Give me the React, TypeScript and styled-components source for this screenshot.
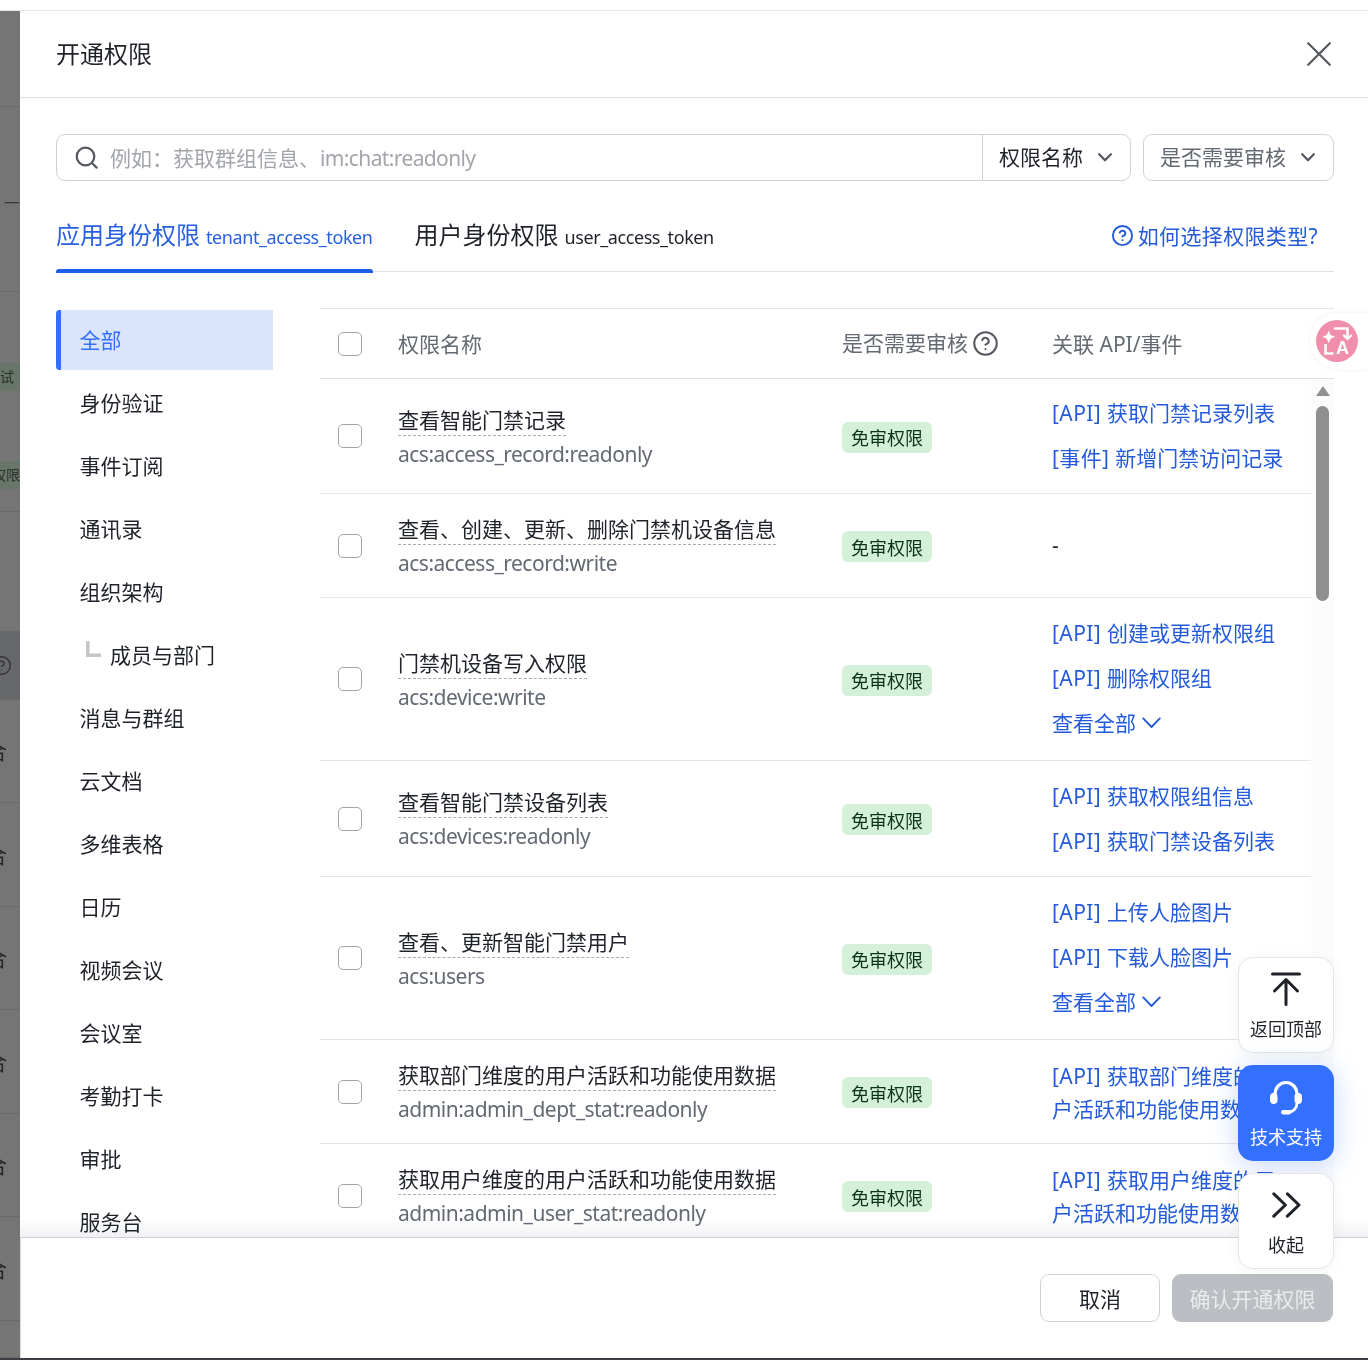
import { createGlobalStyle, styled } from 'styled-components';
import { CircleHelp } from 'lucide-react';

const GlobalStyle = createGlobalStyle`
  html, body { margin: 0; padding: 0; background: #fff; }
  body { font-family: "Noto Sans", "Noto Sans CJK SC", sans-serif; color: #1f2329; }
  * { box-sizing: border-box; }
`;

const Page = styled.div`
  position: relative;
  width: 1368px;
  height: 1360px;
  display: flex;
  flex-direction: column;
  overflow: hidden;
  background: #fff;
`;

const TopRule = styled.div`
  height: 11px;
  flex: none;
  border-bottom: 1px solid #e4e5e7;
`;

const BottomBar = styled.div`
  height: 2px;
  flex: none;
  background: #3b3e42;
`;

const Stage = styled.div`
  flex: 1;
  min-height: 0;
  display: flex;
`;

/* dimmed page behind the drawer */
const Backdrop = styled.div`
  width: 20px;
  flex: none;
  display: flex;
  flex-direction: column;
  overflow: hidden;
  background: #757575;
  padding-top: 1px;
`;

const BackRow = styled.div<{ $h: number; $dark?: boolean; $start?: boolean }>`
  height: ${(p) => p.$h}px;
  flex: none;
  display: flex;
  flex-direction: column;
  align-items: flex-end;
  justify-content: ${(p) => (p.$start ? 'flex-start' : 'center')};
  border-bottom: 1px solid #696969;
  background: ${(p) => (p.$dark ? '#65676a' : '#757575')};
  color: #262626;
  font-size: 21px;
  line-height: 30px;
  padding-right: 13px;
  white-space: nowrap;
`;

const BackDash = styled.div`
  color: #3a3a3a;
  font-size: 16px;
  line-height: 20px;
  margin-top: 8px;
  margin-right: -13px;
`;

const BackTag = styled.div<{ $edge: number; $top: number }>`
  width: 20px;
  height: 28px;
  margin-top: ${(p) => p.$top}px;
  margin-right: -13px;
  padding-right: ${(p) => p.$edge}px;
  display: flex;
  justify-content: flex-end;
  align-items: center;
  background: #68766a;
  color: #2c2f2c;
  font-size: 14px;
  line-height: 20px;
`;

const BackHelp = styled.div`
  margin-right: -5px;
  color: #333;
  display: flex;
`;

const Drawer = styled.div`
  flex: 1;
  min-width: 0;
  display: flex;
  flex-direction: column;
  background: #fff;
`;

const Header = styled.header`
  height: 87px;
  flex: none;
  display: flex;
  align-items: center;
  justify-content: space-between;
  padding: 0 37px 0 36px;
  border-bottom: 1px solid #dee0e3;
`;

const Title = styled.h1`
  margin: 0;
  font-size: 24px;
  font-weight: 400;
  line-height: 34px;
  color: #1f2329;
`;

const CloseButton = styled.button`
  border: 0;
  padding: 0;
  background: none;
  display: flex;
`;

const Content = styled.div`
  flex: 1;
  min-height: 0;
  display: flex;
  flex-direction: column;
  padding: 36px 34px 0 36px;
`;

const Filters = styled.div`
  display: flex;
  gap: 12px;
  height: 47px;
  flex: none;
`;

const SearchBox = styled.div`
  flex: 1;
  display: flex;
  align-items: center;
  gap: 11px;
  padding: 0 0 0 18px;
  border: 1.5px solid #d0d3d6;
  border-radius: 9px;
  overflow: hidden;
`;

const Placeholder = styled.span`
  flex: 1;
  margin-top: -2px;
  font-size: 21px;
  color: #a2a5aa;
  white-space: nowrap;
`;

const TightLatin = styled.span`
  letter-spacing: -0.62px;
`;

const FilterLabel = styled.span`
  margin-top: -3px;
`;

const SearchType = styled.div`
  height: 100%;
  width: 148px;
  flex: none;
  display: flex;
  align-items: center;
  justify-content: space-between;
  padding: 0 18px 0 16px;
  border-left: 1.5px solid #d0d3d6;
  font-size: 21px;
  color: #1f2329;
`;

const SelectBox = styled.div`
  width: 191px;
  flex: none;
  display: flex;
  align-items: center;
  justify-content: space-between;
  padding: 0 18px 0 16px;
  border: 1.5px solid #d0d3d6;
  border-radius: 9px;
  font-size: 21px;
  color: #646a73;
`;

const Tabs = styled.div`
  height: 91px;
  flex: none;
  display: flex;
  align-items: stretch;
  gap: 42px;
  border-bottom: 1.5px solid #dee0e3;
`;

const Tab = styled.div<{ $active?: boolean }>`
  position: relative;
  display: flex;
  align-items: baseline;
  gap: 6px;
  padding-top: 37px;
  color: ${(p) => (p.$active ? '#2860e1' : '#1f2329')};
  white-space: nowrap;

  &::after {
    content: '';
    display: ${(p) => (p.$active ? 'block' : 'none')};
    position: absolute;
    left: 0;
    right: 0;
    bottom: -1.5px;
    height: 4px;
    border-radius: 3px 3px 0 0;
    background: #1f5ee6;
  }
`;

const TabName = styled.span`
  font-size: 24px;
  line-height: 34px;
`;

const TabToken = styled.span`
  font-size: 18px;
  line-height: 26px;
  letter-spacing: -0.42px;
`;

const HowTo = styled.a`
  margin-left: auto;
  margin-right: 16px;
  display: flex;
  align-items: center;
  gap: 4px;
  height: 34px;
  margin-top: 37px;
  font-size: 21px;
  letter-spacing: 0.35px;
  color: #245bdb;
  white-space: nowrap;
`;

const Body = styled.div`
  flex: 1;
  min-height: 0;
  display: flex;
  gap: 47px;
  padding-top: 36px;
`;

const SideNav = styled.nav`
  width: 217px;
  flex: none;
  display: flex;
  flex-direction: column;
  gap: 3px;
  padding-top: 2px;
  overflow: hidden;
`;

const NavItem = styled.div<{ $active?: boolean; $child?: boolean }>`
  position: relative;
  height: 60px;
  flex: none;
  display: flex;
  align-items: center;
  gap: 9px;
  padding-left: ${(p) => (p.$child ? '30px' : '23.5px')};
  padding-bottom: 2px;
  font-size: 21px;
  color: ${(p) => (p.$active ? '#3370ff' : '#1f2329')};
  background: ${(p) => (p.$active ? '#dae5fc' : 'transparent')};

  &::before {
    content: '';
    display: ${(p) => (p.$active ? 'block' : 'none')};
    position: absolute;
    left: 0;
    top: 0;
    bottom: 0;
    width: 5px;
    border-radius: 4px 0 0 4px;
    background: #3370ff;
  }
`;

const BranchMark = styled.svg`
  margin-bottom: 11px;
`;

const TableWrap = styled.div`
  position: relative;
  flex: 1;
  min-width: 0;
  display: flex;
  flex-direction: column;
`;

const HeadRow = styled.div`
  height: 71px;
  flex: none;
  display: flex;
  align-items: center;
  border-top: 1.5px solid #e4e5e7;
  border-bottom: 1.5px solid #dee0e3;
  font-size: 21px;
  color: #646a73;
`;

const CheckCell = styled.div`
  width: 78px;
  flex: none;
  padding-left: 18px;
  display: flex;
`;

const Check = styled.span`
  width: 24px;
  height: 24px;
  border: 1.5px solid #a2a5aa;
  border-radius: 5px;
  background: #fff;
`;

const HeadName = styled.div`
  width: 444px;
  flex: none;
  padding-bottom: 2px;
`;

const NameCell = styled.div`
  width: 444px;
  flex: none;
  display: flex;
  flex-direction: column;
  align-items: flex-start;
  gap: 2px;
  padding-top: 3px;
`;

const StatusCell = styled.div`
  width: 210px;
  flex: none;
  display: flex;
  padding-top: 2px;
`;

const HeadStatus = styled.div`
  width: 210px;
  flex: none;
  display: flex;
  align-items: center;
  gap: 4px;
  line-height: 28px;
`;

const HeadLabel = styled.span`
  margin-top: -2px;
`;

const HeadLinks = styled.div`
  flex: 1;
  padding-bottom: 2px;
`;

const LinkCell = styled.div<{ $tight?: boolean }>`
  width: 240px;
  flex: none;
  display: flex;
  flex-direction: column;
  align-items: flex-start;
  padding-top: ${(p) => (p.$tight ? '2px' : '0')};
`;

const PermName = styled.span`
  font-size: 21px;
  line-height: 30px;
  color: #1f2329;
  border-bottom: 1px dashed #a9acb0;
`;

const PermKey = styled.span`
  font-size: 21px;
  line-height: 33px;
  color: #646a73;
  letter-spacing: -0.5px;
`;

const Tag = styled.span`
  height: 31px;
  width: 90px;
  display: flex;
  align-items: center;
  justify-content: center;
  border-radius: 6px;
  background: #d5f0d9;
  color: #0b3315;
  font-size: 18px;
`;

const ApiLink = styled.a<{ $tight?: boolean }>`
  font-size: 21px;
  line-height: ${(p) => (p.$tight ? '33px' : '45px')};
  color: #245bdb;
`;

const LinkPrefix = styled.span`
  letter-spacing: 0.4px;
`;

const ShowAll = styled.a`
  display: flex;
  align-items: center;
  gap: 6px;
  margin-bottom: 2px;
  font-size: 21px;
  line-height: 45px;
  color: #245bdb;
`;

const Dash = styled.span`
  font-size: 21px;
  line-height: 28px;
  margin-top: -2px;
  color: #1f2329;
`;

const ScrollArea = styled.div`
  flex: 1;
  min-height: 0;
  display: flex;
  overflow: hidden;
`;

const Rows = styled.div`
  width: 991px;
  flex: none;
`;

const Row = styled.div<{ $h: number }>`
  height: ${(p) => p.$h}px;
  display: flex;
  align-items: center;
  border-bottom: 1.5px solid #e4e5e7;
`;

const ScrollBar = styled.div`
  flex: 1;
  display: flex;
  flex-direction: column;
  align-items: flex-start;
  padding: 7px 0 0 5px;
  background: #fcfcfc;
`;

const ScrollArrow = styled.div`
  width: 0;
  height: 0;
  border-left: 7px solid transparent;
  border-right: 7px solid transparent;
  border-bottom: 10px solid #909090;
`;

const ScrollThumb = styled.div`
  width: 13px;
  height: 195px;
  margin-top: 10px;
  border-radius: 7px;
  background: #8f8f8f;
`;

const Footer = styled.footer`
  position: relative;
  height: 121px;
  flex: none;
  display: flex;
  justify-content: flex-end;
  align-items: flex-start;
  gap: 12px;
  padding: 36px 35px 0 0;
  border-top: 1.5px solid #dee0e3;
  border-left: 1px solid #dadada;

  &::before {
    content: '';
    position: absolute;
    left: -1px;
    right: 0;
    bottom: 100%;
    height: 20px;
    pointer-events: none;
    mix-blend-mode: multiply;
    background: linear-gradient(to bottom, #fff, #f0f1f3);
  }
`;

const FootButton = styled.button<{ $primary?: boolean }>`
  height: 48px;
  width: ${(p) => (p.$primary ? '161px' : '120px')};
  border-radius: 9px;
  border: ${(p) => (p.$primary ? '0' : '1.5px solid #d0d3d6')};
  background: ${(p) => (p.$primary ? '#bbbec3' : '#fff')};
  color: ${(p) => (p.$primary ? '#e9eaec' : '#1f2329')};
  font-family: inherit;
  font-size: 21px;
  padding: 0;
`;

/* floating widgets on top of the drawer */
const FloatDock = styled.div`
  position: absolute;
  right: 34px;
  top: 957px;
  display: flex;
  flex-direction: column;
  gap: 12px;
`;

const FloatButton = styled.div<{ $blue?: boolean }>`
  width: 96px;
  height: 96px;
  padding-top: 1px;
  display: flex;
  flex-direction: column;
  align-items: center;
  justify-content: center;
  gap: 7px;
  border-radius: 15px;
  border: ${(p) => (p.$blue ? '0' : '1px solid #e4e5e7')};
  background: ${(p) => (p.$blue ? '#3370ff' : '#fff')};
  color: ${(p) => (p.$blue ? '#fff' : '#1f2329')};
  font-size: 18px;
  line-height: 26px;
  box-shadow: ${(p) =>
    p.$blue ? '0 4px 28px rgba(51, 112, 255, 0.28)' : '0 2px 14px rgba(31, 35, 41, 0.05)'};
`;

const FloatIcon = styled.div`
  height: 40px;
  display: flex;
  align-items: center;
  justify-content: center;
`;

const TranslatePill = styled.div`
  position: absolute;
  right: 0;
  top: 313px;
  width: 58px;
  height: 56px;
  padding: 7px 0 0 6px;
  border-radius: 28px 0 0 28px;
  background: #fff;
  box-shadow: 0 0 6px rgba(0, 0, 0, 0.06);
`;

const SearchIcon = () => (
  <svg width="24" height="24" viewBox="0 0 24 24" fill="none" stroke="#55595f" strokeWidth="2.2" strokeLinecap="round">
    <circle cx="10.5" cy="10.5" r="8.8" />
    <path d="M17 17l4.6 4.6" />
  </svg>
);

const CloseIcon = () => (
  <svg width="24" height="24" viewBox="0 0 24 24" fill="none" stroke="#55595f" strokeWidth="2.2" strokeLinecap="round">
    <path d="M1.2 1.2l21.6 21.6M22.8 1.2L1.2 22.8" />
  </svg>
);

const SelectChevron = () => (
  <svg width="14" height="9" viewBox="0 0 14 9" fill="none" stroke="#55595f" strokeWidth="2.3" strokeLinecap="round" strokeLinejoin="round">
    <path d="M1.2 1.3L7 7.2l5.8-5.9" />
  </svg>
);

const LinkChevron = () => (
  <svg width="19" height="12" viewBox="0 0 19 12" fill="none" stroke="#245bdb" strokeWidth="1.9" strokeLinecap="round" strokeLinejoin="round">
    <path d="M1.2 1.4l8.3 8.6 8.3-8.6" />
  </svg>
);

const BranchIcon = () => (
  <BranchMark width="15" height="16" viewBox="0 0 15 16" fill="none" stroke="#c4c6ca" strokeWidth="3.6">
    <path d="M1.8 0v14.2H15" />
  </BranchMark>
);

const BackToTopIcon = () => (
  <svg width="30" height="34" viewBox="0 0 30 34" fill="none" stroke="#1f2329" strokeWidth="3" strokeLinecap="round" strokeLinejoin="round">
    <path d="M1.5 2h27" />
    <path d="M15 32.5V7.5M3.5 19L15 7.5 26.5 19" />
  </svg>
);

const CollapseIcon = () => (
  <svg width="29" height="26" viewBox="0 0 29 26" fill="none" stroke="#1f2329" strokeWidth="3" strokeLinecap="round" strokeLinejoin="round">
    <path d="M1.8 1.8L13.4 13 1.8 24.2M15.4 1.8L27 13 15.4 24.2" />
  </svg>
);

const HeadsetIcon = () => (
  <svg width="32" height="35" viewBox="0 0 32 35" fill="none">
    <path d="M5 15C5 7.5 9.8 2.5 16 2.5S27 7.5 27 15" stroke="#fff" strokeWidth="3.2" />
    <rect x="0" y="13" width="7.5" height="11" rx="3.7" fill="#fff" />
    <rect x="24.5" y="13" width="7.5" height="11" rx="3.7" fill="#fff" />
    <path d="M27 23c0 5.5-4 8.6-8 9" stroke="#fff" strokeWidth="2.8" />
    <rect x="11" y="30" width="10" height="4.5" rx="2.2" fill="#fff" />
  </svg>
);

const TranslateIcon = () => (
  <svg width="42" height="42" viewBox="0 0 42 42">
    <circle cx="21" cy="21" r="21" fill="#f08fab" />
    <path d="M12.7 10.5l1.9 4.4 4.4 1.9-4.4 1.9-1.9 4.4-1.9-4.4-4.4-1.9 4.4-1.9z" fill="#fff" />
    <path d="M19 8.5h12.5v10M31.5 19L28 15.5M31.5 19l3.5-3.5" fill="none" stroke="#fff" strokeWidth="2.4" strokeLinecap="round" />
    <path d="M9.5 24v9.5h8" fill="none" stroke="#fff" strokeWidth="2.6" />
    <text x="20" y="33.5" fill="#fff" fontSize="18" fontWeight="700" fontFamily="Liberation Sans, sans-serif">A</text>
  </svg>
);

type NavEntry = { label: string; active?: boolean; child?: boolean };

const navItems: NavEntry[] = [
  { label: '全部', active: true },
  { label: '身份验证' },
  { label: '事件订阅' },
  { label: '通讯录' },
  { label: '组织架构' },
  { label: '成员与部门', child: true },
  { label: '消息与群组' },
  { label: '云文档' },
  { label: '多维表格' },
  { label: '日历' },
  { label: '视频会议' },
  { label: '会议室' },
  { label: '考勤打卡' },
  { label: '审批' },
  { label: '服务台' },
];

type PermLink = { kind: string; text: string };

type Perm = {
  name: string;
  key: string;
  height: number;
  links: PermLink[];
  more?: boolean;
  tight?: boolean;
};

const perms: Perm[] = [
  {
    name: '查看智能门禁记录',
    key: 'acs:access_record:readonly',
    height: 115,
    links: [
      { kind: '[API]', text: '获取门禁记录列表' },
      { kind: '[事件]', text: '新增门禁访问记录' },
    ],
  },
  {
    name: '查看、创建、更新、删除门禁机设备信息',
    key: 'acs:access_record:write',
    height: 104,
    links: [],
  },
  {
    name: '门禁机设备写入权限',
    key: 'acs:device:write',
    height: 163,
    links: [
      { kind: '[API]', text: '创建或更新权限组' },
      { kind: '[API]', text: '删除权限组' },
    ],
    more: true,
  },
  {
    name: '查看智能门禁设备列表',
    key: 'acs:devices:readonly',
    height: 116,
    links: [
      { kind: '[API]', text: '获取权限组信息' },
      { kind: '[API]', text: '获取门禁设备列表' },
    ],
  },
  {
    name: '查看、更新智能门禁用户',
    key: 'acs:users',
    height: 163,
    links: [
      { kind: '[API]', text: '上传人脸图片' },
      { kind: '[API]', text: '下载人脸图片' },
    ],
    more: true,
  },
  {
    name: '获取部门维度的用户活跃和功能使用数据',
    key: 'admin:admin_dept_stat:readonly',
    height: 104,
    links: [{ kind: '[API]', text: '获取部门维度的用户活跃和功能使用数据' }],
    tight: true,
  },
  {
    name: '获取用户维度的用户活跃和功能使用数据',
    key: 'admin:admin_user_stat:readonly',
    height: 104,
    links: [{ kind: '[API]', text: '获取用户维度的用户活跃和功能使用数据' }],
    tight: true,
  },
];

export default function App() {
  return (
    <Page>
      <GlobalStyle />
      <TopRule />
      <Stage>
        <Backdrop>
          <BackRow $h={95} />
          <BackRow $h={185}>
            <BackDash>、一</BackDash>
          </BackRow>
          <BackRow $h={220} $start>
            <BackTag $edge={6} $top={71}>测试</BackTag>
            <BackTag $edge={0} $top={70}>权限</BackTag>
          </BackRow>
          <BackRow $h={120} />
          <BackRow $h={68} $dark>
            <BackHelp>
              <CircleHelp size={21} strokeWidth={1.6} />
            </BackHelp>
          </BackRow>
          {[103, 104, 103, 104, 103, 104].map((h, i) => (
            <BackRow key={i} $h={h}>符合</BackRow>
          ))}
          <BackRow $h={37} />
        </Backdrop>
        <Drawer>
          <Header>
            <Title>开通权限</Title>
            <CloseButton>
              <CloseIcon />
            </CloseButton>
          </Header>
          <Content>
            <Filters>
              <SearchBox>
                <SearchIcon />
                <Placeholder>
                  例如：获取群组信息、<TightLatin>im:chat:readonly</TightLatin>
                </Placeholder>
                <SearchType>
                  <FilterLabel>权限名称</FilterLabel>
                  <SelectChevron />
                </SearchType>
              </SearchBox>
              <SelectBox>
                <FilterLabel>是否需要审核</FilterLabel>
                <SelectChevron />
              </SelectBox>
            </Filters>
            <Tabs>
              <Tab $active>
                <TabName>应用身份权限</TabName>
                <TabToken>tenant_access_token</TabToken>
              </Tab>
              <Tab>
                <TabName>用户身份权限</TabName>
                <TabToken>user_access_token</TabToken>
              </Tab>
              <HowTo>
                <CircleHelp size={23} strokeWidth={2} />
                如何选择权限类型?
              </HowTo>
            </Tabs>
            <Body>
              <SideNav>
                {navItems.map((item) => (
                  <NavItem key={item.label} $active={item.active} $child={item.child}>
                    {item.child && <BranchIcon />}
                    {item.label}
                  </NavItem>
                ))}
              </SideNav>
              <TableWrap>
                <HeadRow>
                  <CheckCell>
                    <Check />
                  </CheckCell>
                  <HeadName>权限名称</HeadName>
                  <HeadStatus>
                    <HeadLabel>是否需要审核</HeadLabel>
                    <CircleHelp size={27} strokeWidth={1.8} color="#55595f" />
                  </HeadStatus>
                  <HeadLinks>关联 API/事件</HeadLinks>
                </HeadRow>
                <ScrollArea>
                  <Rows>
                    {perms.map((perm) => (
                      <Row key={perm.key} $h={perm.height}>
                        <CheckCell>
                          <Check />
                        </CheckCell>
                        <NameCell>
                          <PermName>{perm.name}</PermName>
                          <PermKey>{perm.key}</PermKey>
                        </NameCell>
                        <StatusCell>
                          <Tag>免审权限</Tag>
                        </StatusCell>
                        <LinkCell $tight={perm.tight}>
                          {perm.links.length === 0 && <Dash>-</Dash>}
                          {perm.links.map((link) => (
                            <ApiLink key={link.text} $tight={perm.tight}>
                              <LinkPrefix>{link.kind} </LinkPrefix>
                              {link.text}
                            </ApiLink>
                          ))}
                          {perm.more && (
                            <ShowAll>
                              查看全部
                              <LinkChevron />
                            </ShowAll>
                          )}
                        </LinkCell>
                      </Row>
                    ))}
                  </Rows>
                  <ScrollBar>
                    <ScrollArrow />
                    <ScrollThumb />
                  </ScrollBar>
                </ScrollArea>
              </TableWrap>
            </Body>
          </Content>
          <Footer>
            <FootButton>取消</FootButton>
            <FootButton $primary>确认开通权限</FootButton>
          </Footer>
        </Drawer>
      </Stage>
      <BottomBar />
      <TranslatePill>
        <TranslateIcon />
      </TranslatePill>
      <FloatDock>
        <FloatButton>
          <FloatIcon>
            <BackToTopIcon />
          </FloatIcon>
          返回顶部
        </FloatButton>
        <FloatButton $blue>
          <FloatIcon>
            <HeadsetIcon />
          </FloatIcon>
          技术支持
        </FloatButton>
        <FloatButton>
          <FloatIcon>
            <CollapseIcon />
          </FloatIcon>
          收起
        </FloatButton>
      </FloatDock>
    </Page>
  );
}
